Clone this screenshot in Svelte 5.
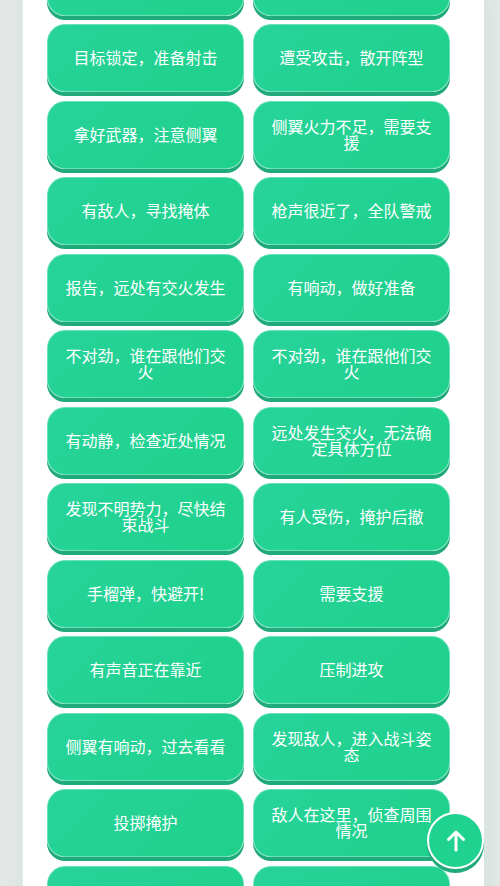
<script lang="ts">
	interface Phrase {
		id: number;
		text: string;
	}

	const lines = [
		'',
		'',
		'目标锁定，准备射击',
		'遭受攻击，散开阵型',
		'拿好武器，注意侧翼',
		'侧翼火力不足，需要支援',
		'有敌人，寻找掩体',
		'枪声很近了，全队警戒',
		'报告，远处有交火发生',
		'有响动，做好准备',
		'不对劲，谁在跟他们交火',
		'不对劲，谁在跟他们交火',
		'有动静，检查近处情况',
		'远处发生交火，无法确定具体方位',
		'发现不明势力，尽快结束战斗',
		'有人受伤，掩护后撤',
		'手榴弹，快避开!',
		'需要支援',
		'有声音正在靠近',
		'压制进攻',
		'侧翼有响动，过去看看',
		'发现敌人，进入战斗姿态',
		'投掷掩护',
		'敌人在这里，侦查周围情况',
		'',
		''
	];

	const phrases: Phrase[] = lines.map((text, id) => ({ id, text }));

	let panel: HTMLElement | undefined = $state();

	function scrollToTop() {
		panel?.scrollIntoView({ behavior: 'smooth' });
	}
</script>

<div class="page">
	<main class="panel" bind:this={panel}>
		<div class="phrases">
			{#each phrases as phrase (phrase.id)}
				<button type="button" class="phrase">{phrase.text}</button>
			{/each}
		</div>
	</main>

	<button type="button" class="to-top" aria-label="返回顶部" onclick={scrollToTop}>
		<svg viewBox="0 0 24 24" width="24" height="24" aria-hidden="true">
			<path d="M12 21V3M4.5 10.5 12 3l7.5 7.5" />
		</svg>
	</button>
</div>

<style>
	:global(body) {
		margin: 0;
		background: #e2e8e6;
	}

	.page {
		--green: #20d28f;
		--green-dark: #20a97b;
		box-sizing: border-box;
		height: 100vh;
		padding: 0 16px 0 22px;
		overflow: hidden;
		font-family: 'Noto Sans CJK SC', sans-serif;
		background: linear-gradient(90deg, #e3e8e6, #e0e7e4);
	}

	.panel {
		box-sizing: border-box;
		min-height: 100%;
		padding: 0 34px 0 24px;
		overflow: hidden;
		border-left: 1px solid #dcf0ea;
		background: #fff;
		box-shadow: 0 0 16px rgba(32, 169, 123, 0.08);
	}

	/* The first row is partly scrolled out of view */
	.phrases {
		display: grid;
		grid-template-columns: 1fr 1fr;
		grid-auto-rows: 68px 69px;
		gap: 8px 9px;
		align-items: start;
		margin-top: -52px;
	}

	.phrase {
		box-sizing: border-box;
		height: 68px;
		padding: 0 16px 3px;
		border: 1px solid #6be2b6;
		border-radius: 18px;
		background: linear-gradient(135deg, #27d39a, #1fd18b);
		box-shadow: 0 4px 0 var(--green-dark);
		color: #fff;
		font-family: inherit;
		font-size: 16px;
		line-height: 16px;
		text-align: center;
		cursor: pointer;
	}

	.to-top {
		position: fixed;
		right: 16px;
		bottom: 17px;
		display: flex;
		align-items: center;
		justify-content: center;
		box-sizing: border-box;
		width: 57px;
		height: 57px;
		padding: 0;
		border: 2px solid #fff;
		border-radius: 50%;
		background: var(--green);
		box-shadow: 0 4px 0 var(--green-dark);
		cursor: pointer;
	}

	.to-top path {
		fill: none;
		stroke: #fff;
		stroke-width: 3;
		stroke-linecap: round;
		stroke-linejoin: round;
	}
</style>
